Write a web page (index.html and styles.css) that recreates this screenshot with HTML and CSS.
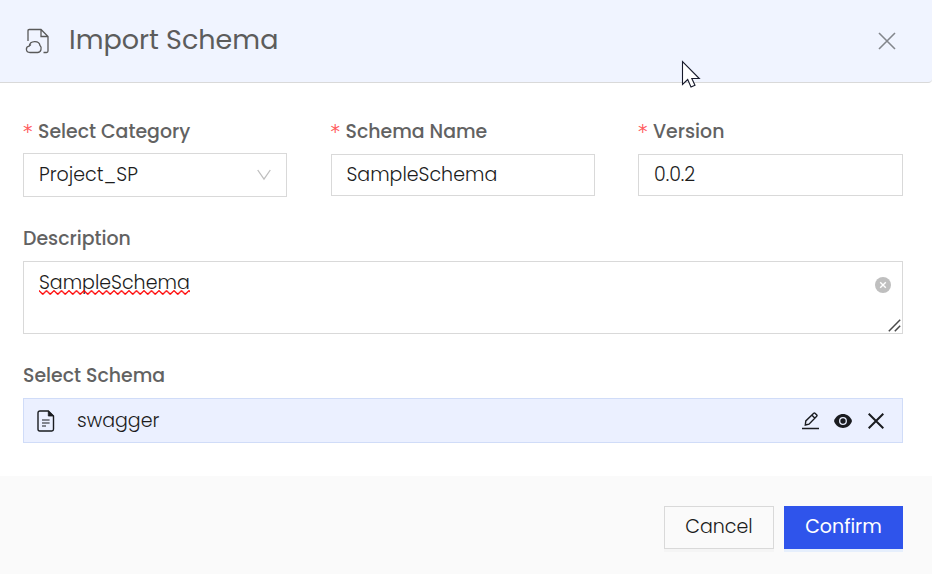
FILE: index.html
```html
<!DOCTYPE html>
<html lang="en">
<head>
<meta charset="utf-8">
<title>Import Schema</title>
<link rel="stylesheet" href="styles.css">
</head>
<body>
<div class="modal">
  <header class="modal-header">
    <svg class="title-icon" width="26" height="26" viewBox="0 0 26 26" fill="none" stroke="#595959" stroke-width="1.3">
      <path d="M4 13V2.7Q4 1.5 5.2 1.5H17L24 8.5V23Q24 24.5 22.5 24.5H19.5M17 1.5V8.5H24"/>
      <path d="M6 24.5C1.4 24.5 1.3 18.8 5.2 18.2C6 12.2 15.2 12.2 16 17.6C18.3 19.6 17.1 24.5 13.6 24.5ZM5.2 18.2Q5.3 16.8 7.1 17.1"/>
    </svg>
    <h1 class="modal-title">Import Schema</h1>
    <svg class="close" width="18" height="18" viewBox="0 0 18 18" fill="none" stroke="#83868c" stroke-width="1.6"><path d="M1 1L17 17M17 1L1 17"/></svg>
  </header>
  <main class="modal-body">
    <div class="fields">
      <div class="field">
        <div class="label"><span class="required">*</span><span>Select Category</span></div>
        <div class="control select"><span>Project_SP</span>
          <svg class="chevron" width="14" height="12" viewBox="0 0 14 12" fill="none" stroke="#bfbfbf" stroke-width="1.3"><path d="M.7 1L7 10L13.3 1"/></svg>
        </div>
      </div>
      <div class="field">
        <div class="label"><span class="required">*</span><span>Schema Name</span></div>
        <div class="control"><span>SampleSchema</span></div>
      </div>
      <div class="field">
        <div class="label"><span class="required">*</span><span>Version</span></div>
        <div class="control"><span>0.0.2</span></div>
      </div>
    </div>
    <div class="label description-label">Description</div>
    <div class="textarea">
      <span class="misspelled">SampleSchema
        <svg class="squiggle" width="151" height="5" viewBox="0 0 151 5" fill="none" stroke="#f00" stroke-width="1.3">
          <defs><pattern id="wave" width="7.5" height="5" patternUnits="userSpaceOnUse"><path d="M-1.1-.4L0 .7L3.75 4.3L7.5.7L8.6-.4"/></pattern></defs>
          <rect width="151" height="5" fill="url(#wave)" stroke="none"/>
        </svg>
      </span>
      <svg class="clear" width="16" height="16" viewBox="0 0 16 16"><circle cx="8" cy="8" r="8" fill="#bfbfbf"/><path d="M5.2 5.2L10.8 10.8M10.8 5.2L5.2 10.8" stroke="#fff" stroke-width="1.4"/></svg>
      <svg class="resize" width="13" height="13" viewBox="0 0 13 13" stroke="#4a4a4a" stroke-width="1.5"><path d="M.8 12.2L12.2.8M6.8 12.2L12.2 6.8"/></svg>
    </div>
    <div class="label schema-label">Select Schema</div>
    <div class="schema-row">
      <svg class="file" width="18" height="22" viewBox="0 0 18 22" fill="none" stroke="#1a1c20" stroke-width="1.4">
        <path d="M3 1H11.3L16.5 6V19.3Q16.5 21 14.8 21H2.7Q1 21 1 19.3V3Q1 1 3 1Z"/><path d="M11.3 1V6H16.5Z" fill="#1a1c20" stroke-width=".8"/><path d="M5 10H12.6M5 13H12.6M5 16H9" stroke-width="1.2"/>
      </svg>
      <span>swagger</span>
      <div class="actions">
        <svg width="17" height="18" viewBox="0 0 17 18" fill="none" stroke="#1a1c20" stroke-width="1.5"><path d="M0 16.5H17"/><path d="M3.3 13L3.8 8.9L11.7 1.2Q12.4.7 13 1.2L14.8 3Q15.3 3.6 14.7 4.2L7 12.2ZM10 3.2L12.7 6" stroke-width="1.4"/></svg>
        <svg class="eye" width="18" height="14" viewBox="0 0 18 14"><path d="M0 7C3-2.3 15-2.3 18 7C15 16.3 3 16.3 0 7Z" fill="#1a1c20"/><circle cx="9" cy="7" r="3.3" fill="none" stroke="#ebf0ff" stroke-width="1.3"/></svg>
        <svg width="16" height="16" viewBox="0 0 16 16" fill="none" stroke="#1a1c20" stroke-width="2"><path d="M.7.7L15.3 15.3M15.3.7L.7 15.3"/></svg>
      </div>
    </div>
  </main>
  <footer class="modal-footer">
    <div class="button cancel">Cancel</div>
    <div class="button confirm">Confirm</div>
  </footer>
</div>
<svg class="cursor" width="20" height="29" viewBox="0 0 20 29"><path d="M1.5 1.5V24.5L6.7 19.5L10 27L14 25.2L10.8 18.5H18.3Z" fill="#fff" stroke="#171a2b" stroke-width="1.1"/></svg>
</body>
</html>
```
FILE: styles.css
```css
* { box-sizing: border-box; }
body { margin: 0; background: #fff; font-family: Poppins, Inter, sans-serif; font-size: 19px; font-weight: 300; color: #1c1c1c; overflow: hidden; }
svg { display: block; flex: none; }
span { white-space: nowrap; }
.modal { height: 574px; display: flex; flex-direction: column; }
.modal-header { height: 83px; display: flex; align-items: center; padding: 0 36px 0 24px; background: #f0f4ff; border-bottom: 1px solid #d9d9d9; border-bottom-right-radius: 4px; }
.modal-title { margin: 0 auto 3px 19px; font-size: 27px; line-height: 40px; font-weight: 400; color: #5c5c5c; }
.modal-body { flex: 1; padding: 34px 29px 0 23px; }
.fields { display: grid; grid-template-columns: 264px 264px 265px; justify-content: space-between; height: 80px; }
.field { display: flex; flex-direction: column; }
.label { height: 30px; line-height: 29px; display: flex; color: #626262; font-size: 18.9px; font-weight: 500; }
.required { width: 15px; color: #ff5c5e; font-family: "DejaVu Sans", sans-serif; font-weight: 400; font-size: 19px; }
.control { height: 42px; margin-top: 7px; padding: 0 15px 2px; border: 1px solid #d9d9d9; display: flex; align-items: center; }
.select { height: 44px; margin-top: 6px; justify-content: space-between; }
.chevron { margin-top: 2px; }
.description-label { margin-top: 27px; }
.textarea { position: relative; height: 73px; margin-top: 7px; padding: 6px 15px; border: 1px solid #d9d9d9; line-height: 30px; }
.misspelled { position: relative; display: inline-block; }
.squiggle { position: absolute; left: 0; top: 22px; }
.clear { position: absolute; right: 11px; top: 15px; }
.resize { position: absolute; right: 1px; bottom: 1px; }
.schema-label { margin-top: 27px; }
.schema-row { height: 45px; margin-top: 7px; padding: 0 18px 0 13px; display: flex; align-items: center; border: 1px solid #d0dcf8; background: #ebf0ff; }
.file { margin-right: 22px; }
.actions { display: flex; align-items: center; gap: 15px; margin: 0 0 0 auto; }
.eye { margin-right: 1px; }
.modal-footer { height: 98px; padding: 30px 29px 0; display: flex; gap: 10px; justify-content: flex-end; background: #fafafa; }
.button { height: 43px; padding-bottom: 2px; display: flex; align-items: center; justify-content: center; }
.cancel { width: 110px; border: 1px solid #d9d9d9; box-shadow: 0 3px 0 #f5f5f5; }
.confirm { width: 119px; color: #fff; font-weight: 400; background: #2f54eb; box-shadow: 0 3px 0 #e6effc; }
.cursor { position: absolute; left: 681px; top: 60px; }
```
